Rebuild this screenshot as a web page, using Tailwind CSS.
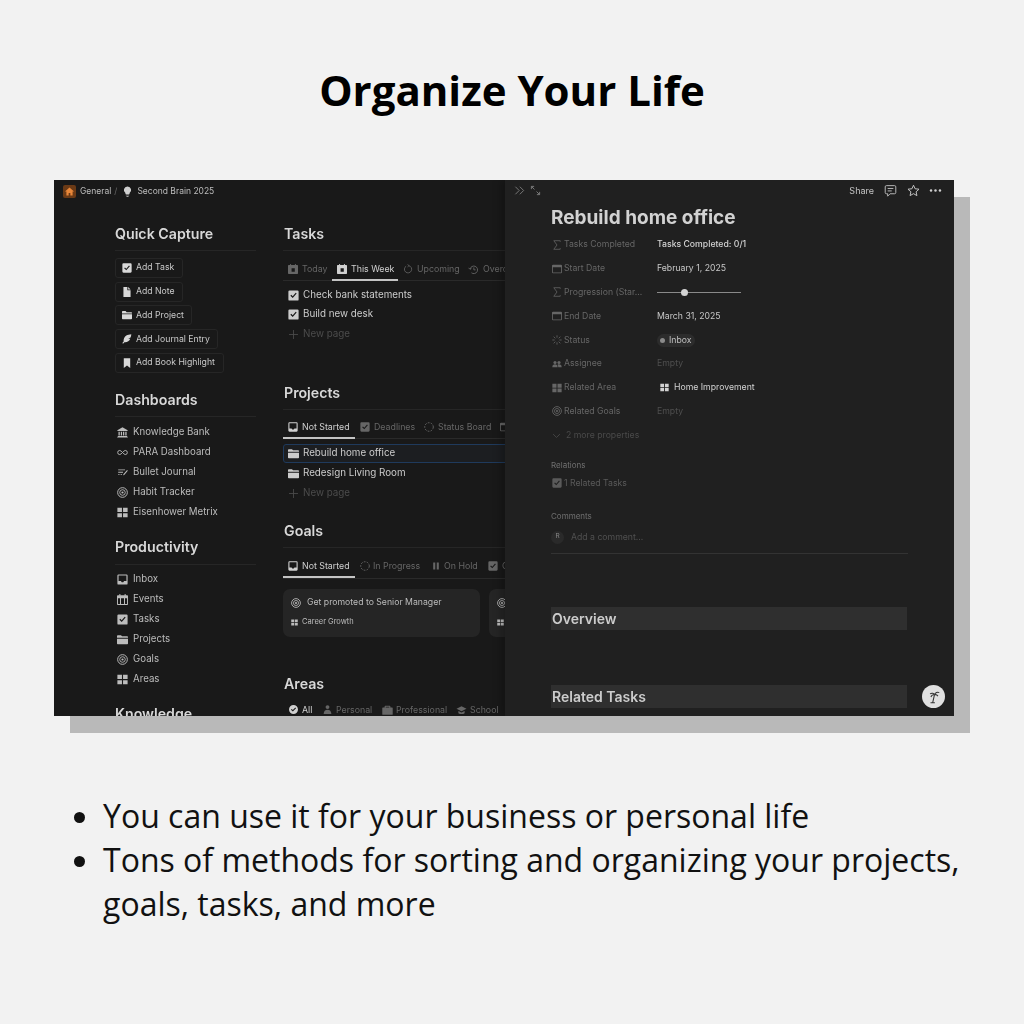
<!DOCTYPE html>
<html lang="en">
<head>
  <meta charset="UTF-8" />
  <title>Organize Your Life</title>
  <script src="https://cdn.jsdelivr.net/npm/@tailwindcss/browser@4"></script>
</head>
<body class="w-[1024px] h-[1024px] overflow-hidden bg-[#f2f2f2] font-['Open_Sans',sans-serif] text-black">

  <!-- icon sheet -->
  <svg class="hidden" xmlns="http://www.w3.org/2000/svg">
    <symbol id="i-check" viewBox="1 1 14 14"><path fill-rule="evenodd" d="M3 1.500h10a1.500 1.500 0 0 1 1.500 1.500v10a1.500 1.500 0 0 1-1.500 1.500H3A1.500 1.500 0 0 1 1.500 13V3A1.500 1.500 0 0 1 3 1.500Zm9 4-1.200-1L7 9 5.200 7.200 4 8.300l3 3Z"/></symbol>
    <symbol id="i-doc" viewBox="1 1 14 14"><path d="M3 1h5.500v4.500H13V15H3Z"/><path d="M9.700 1 13 4.400H9.700Z"/></symbol>
    <symbol id="i-folder" viewBox="1 1.500 14 13"><path d="M1 3.500A1 1 0 0 1 2 2.500h4l1.500 1.500H14a1 1 0 0 1 1 1v.8H1Z"/><path d="M1 7h14v6a1 1 0 0 1-1 1H2a1 1 0 0 1-1-1Z"/></symbol>
    <symbol id="i-leaf" viewBox="1 1 14.500 14.500"><path d="M14.500 1.500C9 1.800 4.500 4 3.500 9c-.2 1-.2 2-.1 2.800L1.500 14l1 1 2-2.200c3.500.5 7.200-1.300 8.500-5l-3 .2 3.400-1.800c.5-1.400 1-3.200 1.100-4.700Z"/></symbol>
    <symbol id="i-mark" viewBox="1 1 14 14"><path d="M3.500 1.500h9V15L8 11.500 3.500 15Z"/></symbol>
    <symbol id="i-bank" viewBox="0.500 0.500 15 15"><path d="M8 1 15 4.800V6H1V4.800Z"/><path d="M2.500 7h1.800v5H2.500Zm3.200 0h1.700v5H5.700Zm3 0h1.700v5H8.700Zm3.100 0h1.800v5h-1.800ZM1.500 12.800h13V14h-13Zm-.7 1.700h14.400v.8H.8Z"/></symbol>
    <symbol id="i-inf" viewBox="0 0 16 16"><path fill="none" stroke="currentColor" stroke-width="1.300" d="M4 5a3 3 0 1 0 0 6c2.500 0 5.500-6 8-6a3 3 0 1 1 0 6C9.500 11 6.500 5 4 5Z"/></symbol>
    <symbol id="i-bullet" viewBox="0 0 16 16"><path d="M1 3.500h10v1.200H1Zm0 3.500h7v1.200H1Zm0 3.500h2v1.200H1Zm3.500 0h2v1.200h-2ZM15 5.500 9.800 11.500l-1.600.6.400-1.700 5.300-5.900Z"/></symbol>
    <symbol id="i-target" viewBox="0.500 0.500 15 15"><g fill="none" stroke="currentColor"><circle cx="8" cy="8" r="6.600" stroke-width="1.300"/><circle cx="8" cy="8" r="3.800" stroke-width="1.200"/></g><circle cx="8" cy="8" r="1.500"/></symbol>
    <symbol id="i-grid" viewBox="1 1 14 14"><path d="M1.500 2h5.800v5.500H1.500Zm7.200 0h5.800v5.500H8.700ZM1.500 8.800h5.800V14H1.500Zm7.200 0h5.800V14H8.700Z"/></symbol>
    <symbol id="i-inbox" viewBox="1 1 14 14"><path fill-rule="evenodd" d="M3 1.500h10A1.500 1.500 0 0 1 14.500 3v10a1.500 1.500 0 0 1-1.500 1.500H3A1.500 1.500 0 0 1 1.500 13V3A1.500 1.500 0 0 1 3 1.500Zm0 1.400V10h3l1 1.500h2l1-1.500h3V2.900Z"/></symbol>
    <symbol id="i-cal" viewBox="1 1 14 14"><path fill-rule="evenodd" d="M4 1h1.300v1.500h5.400V1H12v1.500h2a1 1 0 0 1 1 1V14a1 1 0 0 1-1 1H2a1 1 0 0 1-1-1V3.500a1 1 0 0 1 1-1h2Zm-1.800 5.300V13.800h2.600V6.300Zm3.900 0v7.500h3.800V6.300Zm5.100 0v7.500h2.600V6.300Z"/></symbol>
    <symbol id="i-week" viewBox="1 1 14 14"><path fill-rule="evenodd" d="M4 1h1.300v1.500h5.400V1H12v1.500h2a1 1 0 0 1 1 1V14a1 1 0 0 1-1 1H2a1 1 0 0 1-1-1V3.500a1 1 0 0 1 1-1h2Zm2 6v5h4.500V7Z"/></symbol>
    <symbol id="i-date" viewBox="1 1 14 14"><path fill-rule="evenodd" d="M2.500 2h11A1.500 1.500 0 0 1 15 3.500v9a1.500 1.500 0 0 1-1.500 1.500h-11A1.500 1.500 0 0 1 1 12.500v-9A1.500 1.500 0 0 1 2.500 2Zm-.3 3.500v7a.3.300 0 0 0 .3.300h11a.3.300 0 0 0 .3-.3v-7Z"/></symbol>
    <symbol id="i-up" viewBox="0 0 16 16"><path fill="none" stroke="currentColor" stroke-width="1.300" d="M5 3.500a5.800 5.800 0 1 0 4-.8M7.500 0.500 9.500 2.700 7.300 4.600"/></symbol>
    <symbol id="i-over" viewBox="0 0 16 16"><path fill="none" stroke="currentColor" stroke-width="1.300" d="M3 7.500A5.500 5.500 0 1 1 5 12.800M.8 5.500 3 7.800l2.300-2.100M8.500 5v3.500h2.500"/></symbol>
    <symbol id="i-dash" viewBox="1 1 14 14"><circle cx="8" cy="8" r="6" fill="none" stroke="currentColor" stroke-width="1.400" stroke-dasharray="2.500 1.800"/></symbol>
    <symbol id="i-status" viewBox="0.500 0.500 15 15"><path fill="none" stroke="currentColor" stroke-width="1.200" d="M8 1v3.500M8 11.500V15M1 8h3.500M11.500 8H15M3 3l2.500 2.500M10.500 10.500 13 13M13 3l-2.500 2.500M5.500 10.500 3 13"/></symbol>
    <symbol id="i-pause" viewBox="0 0 16 16"><path d="M3.500 2.500h3.300v11H3.500Zm5.700 0h3.300v11H9.200Z"/></symbol>
    <symbol id="i-ok" viewBox="1 1 14 14"><path fill-rule="evenodd" d="M8 1a7 7 0 1 1 0 14A7 7 0 0 1 8 1Zm4 5-1.200-1.100L7 8.900 5.200 7.100 4 8.300l3 3Z"/></symbol>
    <symbol id="i-person" viewBox="1 1 14 14"><circle cx="8" cy="4.200" r="3"/><path d="M2 15c0-4 2.500-6.500 6-6.500s6 2.500 6 6.500Z"/></symbol>
    <symbol id="i-case" viewBox="0.500 1 15 14"><path fill-rule="evenodd" d="M5 2h6a1 1 0 0 1 1 1v1.500h2.500a.8.800 0 0 1 .8.800V14a.8.800 0 0 1-.8.800h-13A.8.800 0 0 1 .7 14V5.300a.8.800 0 0 1 .8-.8H4V3a1 1 0 0 1 1-1Zm.5 1.300v1.200h5V3.300Z"/></symbol>
    <symbol id="i-grad" viewBox="0 0 16 16"><path d="M8 2 16 6 8 10 0 6Z"/><path d="M3 9.500 8 12l5-2.500V13c-3 2-7 2-10 0Z"/></symbol>
    <symbol id="i-people" viewBox="0 0 16 16"><circle cx="4.800" cy="5.500" r="2.500"/><circle cx="11.200" cy="5.500" r="2.500"/><path d="M.5 13c0-3 1.800-4.500 4.300-4.500S9 10 9 13Zm9.500 0c0-1.500-.3-3-1.200-4 .7-.4 1.500-.5 2.400-.5 2.500 0 4.300 1.500 4.300 4.500Z"/></symbol>
    <symbol id="i-sigma" viewBox="1 1 14 14"><path fill="none" stroke="currentColor" stroke-width="1.100" d="M12.500 3.500V2H3.500L8 8l-4.500 6h9v-1.500"/></symbol>
    <symbol id="i-plus" viewBox="0 0 16 16"><path fill="none" stroke="currentColor" stroke-width="1.200" d="M8 1.500v13M1.500 8h13"/></symbol>
  </svg>

  <h1 class="pt-[58px] h-[180px] text-center text-[42px] leading-[64px] font-bold">Organize Your Life</h1>

  <!-- screenshot with offset shadow -->
  <div class="relative ml-[54px] w-[900px] h-[536px] bg-[#191919] shadow-[16px_17px_0_#b9b9b9] font-['Inter',sans-serif]">
    <div class="absolute inset-0 overflow-hidden blur-[0.3px]">

      <!-- breadcrumb -->
      <div class="flex items-center h-[20px] pl-[9px] pt-[2px] text-[8.500px] text-[#bcbcbc]">
        <span class="flex items-center justify-center w-[13px] h-[13px] rounded-[2px] bg-[#6b3a16] text-[#e8873a]">
          <svg class="w-[9px] h-[9px]" fill="currentColor" viewBox="0 0 16 16"><path d="M8 1 16 8h-2.500v7H9.500v-4.500h-3V15H2.500V8H0Z"/></svg>
        </span>
        <span class="ml-[4px]">General</span><span class="ml-[3px] text-[#666]">/</span>
        <svg class="ml-[5px] w-[11px] h-[11px] text-[#d0d0d0]" fill="currentColor" viewBox="0 0 16 16"><path d="M8 .8a5.200 5.200 0 0 1 3 9.500V11.500H5v-1.200A5.200 5.200 0 0 1 8 .8ZM5.500 12.500h5v1h-5Zm1 2h3V15.500h-3Z"/></svg>
        <span class="ml-[4px]">Second Brain 2025</span>
      </div>

      <div class="flex pl-[61px]">
        <!-- left column -->
        <div class="w-[141px] shrink-0 pt-[24px]">
          <h2 class="h-[27px] leading-[20px] text-[14.200px] font-semibold text-[#d8d8d8] border-b border-[#262626]">Quick Capture</h2>
          <div class="mt-[7px] flex flex-col items-start gap-[3.700px] text-[8.700px] text-[#cacaca]">
            <a class="flex items-center h-[20px] w-[68px] pl-[6px] rounded-[3px] border border-[#262626]"><svg class="w-[10px] h-[10px] mr-[4px] text-[#d8d8d8]" fill="currentColor"><use href="#i-check"/></svg>Add Task</a>
            <a class="flex items-center h-[20px] w-[68px] pl-[6px] rounded-[3px] border border-[#262626]"><svg class="w-[10px] h-[10px] mr-[4px] text-[#d8d8d8]" fill="currentColor"><use href="#i-doc"/></svg>Add Note</a>
            <a class="flex items-center h-[20px] w-[77px] pl-[6px] rounded-[3px] border border-[#262626]"><svg class="w-[10px] h-[10px] mr-[4px] text-[#d8d8d8]" fill="currentColor"><use href="#i-folder"/></svg>Add Project</a>
            <a class="flex items-center h-[20px] w-[103px] pl-[6px] rounded-[3px] border border-[#262626]"><svg class="w-[10px] h-[10px] mr-[4px] text-[#d8d8d8]" fill="currentColor"><use href="#i-leaf"/></svg>Add Journal Entry</a>
            <a class="flex items-center h-[20px] w-[109px] pl-[6px] rounded-[3px] border border-[#262626]"><svg class="w-[10px] h-[10px] mr-[4px] text-[#d8d8d8]" fill="currentColor"><use href="#i-mark"/></svg>Add Book Highlight</a>
          </div>

          <h2 class="mt-[17px] h-[27px] leading-[20px] text-[14.200px] font-semibold text-[#d8d8d8] border-b border-[#262626]">Dashboards</h2>
          <div class="mt-[5.500px] mb-[-1.500px] text-[9.700px] text-[#bcbcbc]">
            <div class="flex items-center h-[20px] pl-[2px]"><svg class="w-[11px] h-[11px] mr-[5px]" fill="currentColor"><use href="#i-bank"/></svg>Knowledge Bank</div>
            <div class="flex items-center h-[20px] pl-[2px]"><svg class="w-[13px] h-[11px] mr-[4px] -ml-[1px]" fill="currentColor"><use href="#i-inf"/></svg>PARA Dashboard</div>
            <div class="flex items-center h-[20px] pl-[2px]"><svg class="w-[12px] h-[11px] mr-[4px]" fill="currentColor"><use href="#i-bullet"/></svg>Bullet Journal</div>
            <div class="flex items-center h-[20px] pl-[2px]"><svg class="w-[11px] h-[11px] mr-[5px]" fill="currentColor"><use href="#i-target"/></svg>Habit Tracker</div>
            <div class="flex items-center h-[20px] pl-[2px]"><svg class="w-[11px] h-[11px] mr-[5px]" fill="currentColor"><use href="#i-grid"/></svg>Eisenhower Metrix</div>
          </div>

          <h2 class="mt-[16px] h-[28px] leading-[20px] text-[14.200px] font-semibold text-[#d8d8d8] border-b border-[#262626]">Productivity</h2>
          <div class="mt-[4.500px] mb-[-1.500px] text-[9.700px] text-[#bcbcbc]">
            <div class="flex items-center h-[20px] pl-[2px]"><svg class="w-[11px] h-[11px] mr-[5px]" fill="currentColor"><use href="#i-inbox"/></svg>Inbox</div>
            <div class="flex items-center h-[20px] pl-[2px]"><svg class="w-[11px] h-[11px] mr-[5px]" fill="currentColor"><use href="#i-cal"/></svg>Events</div>
            <div class="flex items-center h-[20px] pl-[2px]"><svg class="w-[11px] h-[11px] mr-[5px]" fill="currentColor"><use href="#i-check"/></svg>Tasks</div>
            <div class="flex items-center h-[20px] pl-[2px]"><svg class="w-[11px] h-[11px] mr-[5px]" fill="currentColor"><use href="#i-folder"/></svg>Projects</div>
            <div class="flex items-center h-[20px] pl-[2px]"><svg class="w-[11px] h-[11px] mr-[5px]" fill="currentColor"><use href="#i-target"/></svg>Goals</div>
            <div class="flex items-center h-[20px] pl-[2px]"><svg class="w-[11px] h-[11px] mr-[5px]" fill="currentColor"><use href="#i-grid"/></svg>Areas</div>
          </div>

          <h2 class="mt-[16px] h-[27px] leading-[20px] text-[14.200px] font-semibold text-[#d8d8d8]">Knowledge</h2>
        </div>

        <!-- middle column -->
        <div class="ml-[27px] w-[240px] shrink-0 pt-[24px]">
          <h2 class="h-[27px] pl-[1px] leading-[20px] text-[14.200px] font-semibold text-[#d8d8d8] border-b border-[#262626]">Tasks</h2>
          <div class="flex h-[30px] pt-[8px] text-[8.800px] whitespace-nowrap border-b border-[#2a2a2a] text-[#666666]">
            <span class="flex items-center shrink-0 h-[20px] pl-[5px] w-[49px]"><svg class="w-[10px] h-[10px] mr-[4px]" fill="currentColor"><use href="#i-week"/></svg>Today</span>
            <span class="flex items-center shrink-0 h-[22px] pl-[5px] w-[66px] text-[#d0d0d0] border-b-2 border-[#c4c4c4]"><svg class="w-[10px] h-[10px] mr-[4px]" fill="currentColor"><use href="#i-week"/></svg>This Week</span>
            <span class="flex items-center shrink-0 h-[20px] pl-[5px] w-[66px]"><svg class="w-[10px] h-[10px] mr-[4px]" fill="currentColor"><use href="#i-up"/></svg>Upcoming</span>
            <span class="flex items-center shrink-0 h-[20px] pl-[4px]"><svg class="w-[11px] h-[11px] mr-[4px]" fill="currentColor"><use href="#i-over"/></svg>Overdue</span>
          </div>
          <div class="mt-[4.500px] mb-[-1px] text-[9.800px] text-[#cccccc]">
            <div class="flex items-center h-[19.500px] pl-[5px]"><svg class="w-[11px] h-[11px] mr-[4px]" fill="currentColor"><use href="#i-check"/></svg>Check bank statements</div>
            <div class="flex items-center h-[19.500px] pl-[5px]"><svg class="w-[11px] h-[11px] mr-[4px]" fill="currentColor"><use href="#i-check"/></svg>Build new desk</div>
            <div class="flex items-center h-[20px] pl-[5px] text-[#4c4c4c]"><svg class="w-[11px] h-[11px] mr-[4px]" fill="currentColor"><use href="#i-plus"/></svg>New page</div>
          </div>

          <h2 class="mt-[39.500px] h-[27px] pl-[1px] leading-[20px] text-[14.200px] font-semibold text-[#d8d8d8] border-b border-[#262626]">Projects</h2>
          <div class="flex h-[29px] pt-[7px] text-[8.800px] whitespace-nowrap border-b border-[#2a2a2a] text-[#666666]">
            <span class="flex items-center shrink-0 h-[22px] pl-[5px] w-[72px] text-[#d0d0d0] border-b-2 border-[#c4c4c4]"><svg class="w-[10px] h-[10px] mr-[4px]" fill="currentColor"><use href="#i-inbox"/></svg>Not Started</span>
            <span class="flex items-center shrink-0 h-[20px] pl-[5px] w-[65px]"><svg class="w-[10px] h-[10px] mr-[4px]" fill="currentColor"><use href="#i-check"/></svg>Deadlines</span>
            <span class="flex items-center shrink-0 h-[20px] pl-[4px] w-[78px]"><svg class="w-[10px] h-[10px] mr-[4px]" fill="currentColor"><use href="#i-dash"/></svg>Status Board</span>
            <span class="flex items-center shrink-0 h-[20px] pl-[2px]"><svg class="w-[10px] h-[10px]" fill="currentColor"><use href="#i-date"/></svg></span>
          </div>
          <div class="mt-[5px] text-[9.800px] text-[#cccccc]">
            <div class="flex items-center h-[19px] pl-[5px] border border-[#1f3a5c] rounded-[3px] bg-[#1c1e21]"><svg class="w-[11px] h-[11px] mr-[4px] -ml-[1px]" fill="currentColor"><use href="#i-folder"/></svg>Rebuild home office</div>
            <div class="flex items-center h-[20px] pl-[5px]"><svg class="w-[11px] h-[11px] mr-[4px]" fill="currentColor"><use href="#i-folder"/></svg>Redesign Living Room</div>
            <div class="flex items-center h-[20px] pl-[5px] text-[#4c4c4c]"><svg class="w-[11px] h-[11px] mr-[4px]" fill="currentColor"><use href="#i-plus"/></svg>New page</div>
          </div>

          <h2 class="mt-[18px] h-[27px] pl-[1px] leading-[20px] text-[14.200px] font-semibold text-[#d8d8d8] border-b border-[#262626]">Goals</h2>
          <div class="flex h-[31px] pt-[8px] text-[8.800px] whitespace-nowrap border-b border-[#2a2a2a] text-[#666666]">
            <span class="flex items-center shrink-0 h-[22px] pl-[5px] w-[72px] text-[#d0d0d0] border-b-2 border-[#c4c4c4]"><svg class="w-[10px] h-[10px] mr-[4px]" fill="currentColor"><use href="#i-inbox"/></svg>Not Started</span>
            <span class="flex items-center shrink-0 h-[20px] pl-[5px] w-[71px]"><svg class="w-[10px] h-[10px] mr-[3px]" fill="currentColor"><use href="#i-dash"/></svg>In Progress</span>
            <span class="flex items-center shrink-0 h-[20px] pl-[5px] w-[59px]"><svg class="w-[10px] h-[10px] mr-[3px]" fill="currentColor"><use href="#i-pause"/></svg>On Hold</span>
            <span class="flex items-center shrink-0 h-[20px] pl-[3px]"><svg class="w-[10px] h-[10px] mr-[4px]" fill="currentColor"><use href="#i-check"/></svg>Completed</span>
          </div>
          <div class="mt-[10px] flex gap-[9px]">
            <div class="w-[197px] h-[48px] shrink-0 rounded-[7px] bg-[#252525] pl-[8px] pt-[7px]">
              <div class="flex items-center h-[14px] text-[8.700px] text-[#bcbcbc]"><svg class="w-[10px] h-[10px] mr-[6px]" fill="currentColor"><use href="#i-target"/></svg>Get promoted to Senior Manager</div>
              <div class="flex items-center h-[14px] mt-[5px] text-[7.500px] text-[#bcbcbc]"><svg class="w-[7px] h-[7px] mr-[4px]" fill="currentColor"><use href="#i-grid"/></svg>Career Growth</div>
            </div>
            <div class="w-[197px] h-[48px] shrink-0 rounded-[7px] bg-[#252525] pl-[8px] pt-[7px]">
              <div class="flex items-center h-[14px] text-[#bcbcbc]"><svg class="w-[10px] h-[10px]" fill="currentColor"><use href="#i-target"/></svg></div>
              <div class="flex items-center h-[14px] mt-[5px] text-[#bcbcbc]"><svg class="w-[7px] h-[7px]" fill="currentColor"><use href="#i-grid"/></svg></div>
            </div>
          </div>

          <h2 class="mt-[37px] h-[20px] pl-[1px] leading-[20px] text-[14.200px] font-semibold text-[#d8d8d8]">Areas</h2>
          <div class="flex mt-[7px] h-[17px] items-center text-[8.800px] whitespace-nowrap text-[#666666]">
            <span class="flex items-center shrink-0 pl-[6px] w-[32px] text-[#d0d0d0]"><svg class="w-[9px] h-[9px] mr-[4px]" fill="currentColor"><use href="#i-ok"/></svg>All</span>
            <span class="flex items-center shrink-0 pl-[8px] w-[64px]"><svg class="w-[9px] h-[9px] mr-[4px]" fill="currentColor"><use href="#i-person"/></svg>Personal</span>
            <span class="flex items-center shrink-0 pl-[3px] w-[74px]"><svg class="w-[11px] h-[10px] mr-[3px]" fill="currentColor"><use href="#i-case"/></svg>Professional</span>
            <span class="flex items-center shrink-0 pl-[3px]"><svg class="w-[11px] h-[10px] mr-[3px]" fill="currentColor"><use href="#i-grad"/></svg>School</span>
          </div>
        </div>
      </div>

      <!-- side peek, lies over the database views -->
      <aside class="absolute top-0 right-0 bottom-0 w-[449px] bg-[#202020] shadow-[-4px_0_8px_rgba(0,0,0,0.25)]">
        <div class="flex items-center h-[20px] pt-[1px] pl-[9px] pr-[12px] text-[#7a7a7a]">
          <svg class="w-[11px] h-[11px]" fill="none" stroke="currentColor" stroke-width="1.400" viewBox="0 0 16 16"><path d="M2 2.500 7.500 8 2 13.500M8.500 2.500 14 8l-5.500 5.500"/></svg>
          <svg class="ml-[5px] w-[11px] h-[11px]" fill="none" stroke="currentColor" stroke-width="1.400" viewBox="0 0 16 16"><path d="M2 6V2h4M2 2l4.500 4.500M14 10v4h-4M14 14 9.500 9.500"/></svg>
          <span class="ml-auto text-[9px] text-[#c4c4c4]">Share</span>
          <svg class="ml-[10px] w-[13px] h-[13px] text-[#b8b8b8]" fill="none" stroke="currentColor" stroke-width="1.200" viewBox="0 0 16 16"><path d="M3 2h10a1.500 1.500 0 0 1 1.500 1.500v7A1.500 1.500 0 0 1 13 12H7.500L4.500 15v-3H3a1.500 1.500 0 0 1-1.500-1.500v-7A1.500 1.500 0 0 1 3 2ZM4.500 5.500h7M4.500 8.500h5"/></svg>
          <svg class="ml-[10px] w-[13px] h-[13px] text-[#c4c4c4]" fill="none" stroke="currentColor" stroke-width="1.200" viewBox="0 0 16 16"><path d="m8 1.500 2 4.400 4.800.5-3.600 3.200 1 4.700L8 11.900l-4.200 2.400 1-4.700L1.200 6.400 6 5.900Z"/></svg>
          <svg class="ml-[9px] w-[13px] h-[13px] text-[#d0d0d0]" fill="currentColor" viewBox="0 0 16 16"><circle cx="2.500" cy="8" r="1.500"/><circle cx="8" cy="8" r="1.500"/><circle cx="13.500" cy="8" r="1.500"/></svg>
        </div>

        <div class="pl-[46px] pr-[46px]">
          <h1 class="mt-[6px] h-[24px] leading-[24px] text-[19px] font-bold text-[#d2d2d2]">Rebuild home office</h1>

          <div class="mt-[3px] text-[8.700px] text-[#666666]">
            <div class="flex items-center h-[23.800px]"><span class="flex items-center w-[106px]"><svg class="w-[10px] h-[10px] ml-[1px] mr-[2px]" fill="currentColor"><use href="#i-sigma"/></svg>Tasks Completed</span><span class="text-[#d4d4d4] font-medium">Tasks Completed: 0/1</span></div>
            <div class="flex items-center h-[23.800px]"><span class="flex items-center w-[106px]"><svg class="w-[10px] h-[10px] ml-[1px] mr-[2px]" fill="currentColor"><use href="#i-date"/></svg>Start Date</span><span class="text-[#c8c8c8]">February 1, 2025</span></div>
            <div class="flex items-center h-[23.800px]"><span class="flex items-center w-[106px] whitespace-nowrap"><svg class="w-[10px] h-[10px] ml-[1px] mr-[2px]" fill="currentColor"><use href="#i-sigma"/></svg>Progression (Star...</span><span class="relative block w-[84px] h-[1px] bg-[#8a8a8a]"><span class="absolute left-[24px] -top-[3px] w-[7px] h-[7px] rounded-full bg-[#d4d4d4]"></span></span></div>
            <div class="flex items-center h-[23.800px]"><span class="flex items-center w-[106px]"><svg class="w-[10px] h-[10px] ml-[1px] mr-[2px]" fill="currentColor"><use href="#i-date"/></svg>End Date</span><span class="text-[#c8c8c8]">March 31, 2025</span></div>
            <div class="flex items-center h-[23.800px]"><span class="flex items-center w-[106px]"><svg class="w-[10px] h-[10px] ml-[1px] mr-[2px]" fill="currentColor"><use href="#i-status"/></svg>Status</span><span class="flex items-center h-[13px] px-[3px] rounded-full bg-[#2c2c2c] text-[#c0c0c0]"><span class="w-[5px] h-[5px] rounded-full bg-[#8a8a8a] mr-[4px]"></span>Inbox</span></div>
            <div class="flex items-center h-[23.800px]"><span class="flex items-center w-[106px]"><svg class="w-[10px] h-[10px] ml-[1px] mr-[2px]" fill="currentColor"><use href="#i-people"/></svg>Assignee</span><span class="text-[#4f4f4f]">Empty</span></div>
            <div class="flex items-center h-[23.800px]"><span class="flex items-center w-[106px]"><svg class="w-[10px] h-[10px] ml-[1px] mr-[2px]" fill="currentColor"><use href="#i-grid"/></svg>Related Area</span><span class="flex items-center pl-[3px] text-[#d2d2d2]"><svg class="w-[9px] h-[9px] mr-[5px]" fill="currentColor"><use href="#i-grid"/></svg>Home Improvement</span></div>
            <div class="flex items-center h-[23.800px]"><span class="flex items-center w-[106px]"><svg class="w-[10px] h-[10px] ml-[1px] mr-[2px]" fill="currentColor"><use href="#i-target"/></svg>Related Goals</span><span class="text-[#4f4f4f]">Empty</span></div>
            <div class="flex items-center h-[23.800px] text-[#4a4a4a]"><svg class="w-[9px] h-[9px] ml-[1px] mr-[5px]" fill="none" stroke="currentColor" stroke-width="1.500" viewBox="0 0 16 16"><path d="M2 5.500 8 11.500l6-6"/></svg>2 more properties</div>
          </div>

          <div class="mt-[11px] h-[14px] leading-[14px] text-[8px] text-[#707070]">Relations</div>
          <div class="mt-[4px] flex items-center h-[14px] text-[8.700px] text-[#5a5a5a]"><svg class="w-[10px] h-[10px] ml-[1px] mr-[2px]" fill="currentColor"><use href="#i-check"/></svg>1 Related Tasks</div>
          <div class="mt-[19px] h-[14px] leading-[14px] text-[8px] text-[#707070]">Comments</div>
          <div class="mt-[5px] flex items-center h-[18px] text-[8.700px] text-[#505050]"><span class="flex items-center justify-center w-[13px] h-[13px] mr-[7px] rounded-full bg-[#2a2a2a] text-[6.500px] text-[#8a8a8a]">R</span>Add a comment...</div>
          <div class="mt-[7px] w-[357px] border-b border-[#333333]"></div>

          <div class="mt-[53px] flex items-center h-[23px] w-[356px] bg-[#2f2f2f] text-[14px] font-semibold text-[#cccccc] pl-[1px]">Overview</div>
          <div class="mt-[55px] flex items-center h-[23px] w-[356px] bg-[#2f2f2f] text-[14px] font-semibold text-[#cccccc] pl-[1px]">Related Tasks</div>
        </div>
      </aside>

      <!-- help bubble -->
      <div class="absolute left-[868px] top-[505px] flex items-center justify-center w-[23px] h-[23px] rounded-full bg-[#e0e0e0] text-[#333]">
        <svg class="w-[14px] h-[14px]" fill="none" stroke="currentColor" stroke-width="1.200" viewBox="0 0 16 16"><path d="M8.500 5.500 6.500 14.500M4 14.500h5M8.500 5.500C7.500 3.500 5.500 3 3.500 4.500M8.500 5.500C9.500 3 12 2 14 3M8.500 5.500c1.500-.5 3 0 4 1.500M8.500 5.500C6.500 5 5 6 4.500 8"/></svg>
      </div>
    </div>
  </div>

  <ul class="mt-[78px] ml-[103px] w-[865px] list-disc text-[32px] leading-[44px] text-[#111]">
    <li>You can use it for your business or personal life</li>
    <li>Tons of methods for sorting and organizing your projects, goals, tasks, and more</li>
  </ul>
</body>
</html>
